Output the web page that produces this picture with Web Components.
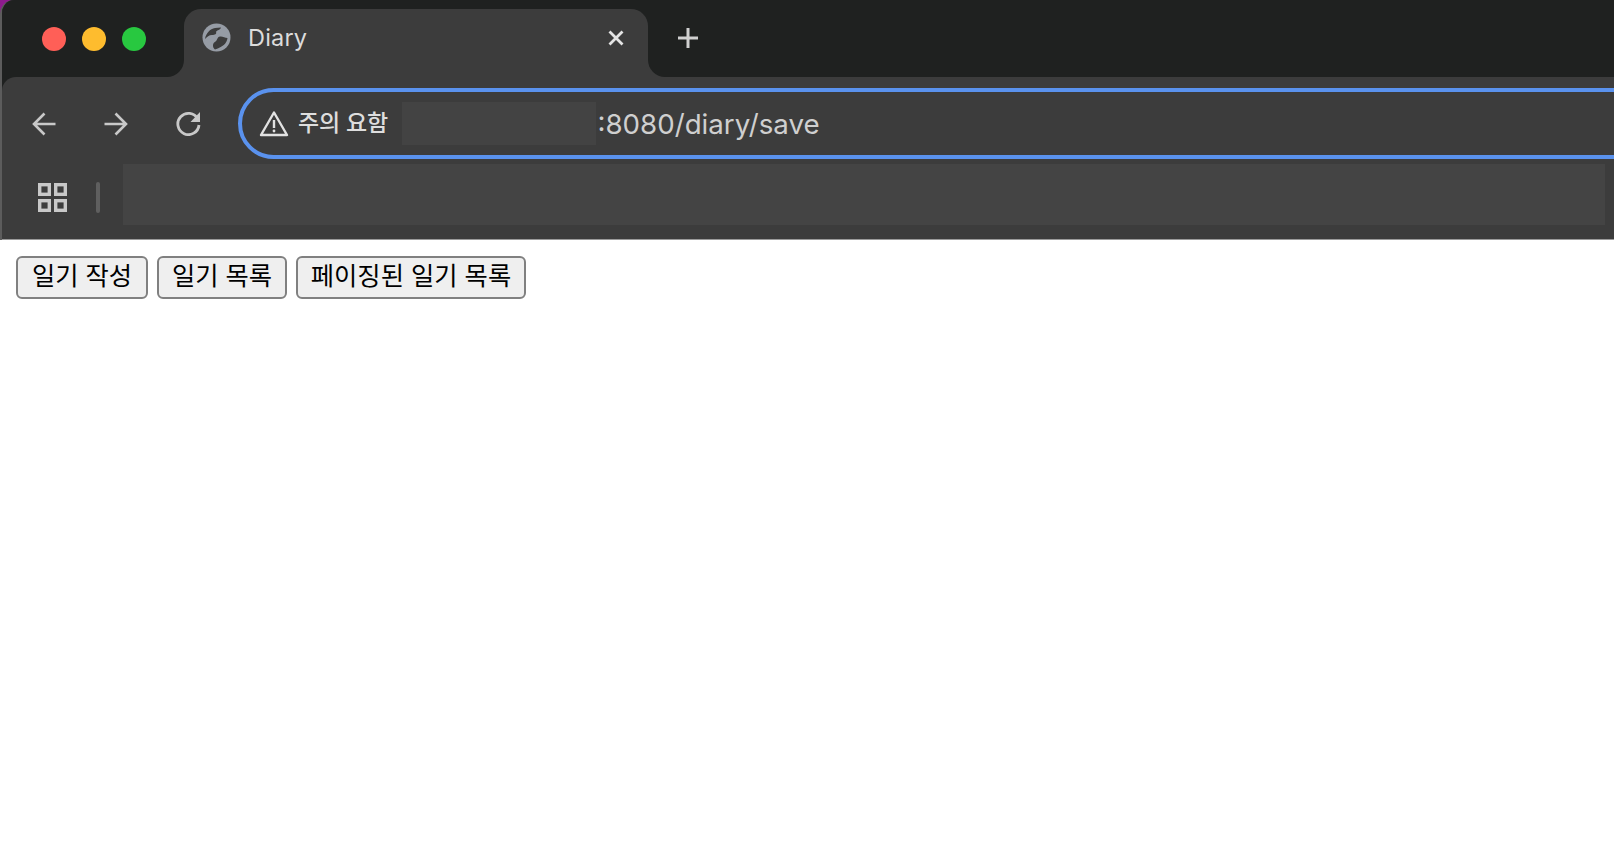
<!DOCTYPE html>
<html lang="ko">
<head>
<meta charset="utf-8">
<title>Diary</title>
<style>
html,body{margin:0;padding:0;background:#fff;overflow:hidden;height:100%}
body{font-family:"Noto Sans CJK KR","Liberation Sans",sans-serif}
</style>
</head>
<body>
<browser-window>
  <browser-tab title-text="Diary"></browser-tab>
  <omni-box slot="omni" badge="주의 요함" path=":8080/diary/save"></omni-box>
</browser-window>
<page-nav>
  <page-button w="132">일기 작성</page-button>
  <page-button w="130">일기 목록</page-button>
  <page-button w="230">페이징된 일기 목록</page-button>
</page-nav>
<script>
const def=(name,html,attrs)=>{customElements.define(name,class extends HTMLElement{
  constructor(){super();const r=this.attachShadow({mode:'open'});
    r.innerHTML=html;}
  connectedCallback(){(attrs||[]).forEach(a=>{const v=this.getAttribute(a);
    this.shadowRoot.querySelectorAll('[data-a="'+a+'"]').forEach(n=>n.textContent=v||'')})}
})};

def('traffic-lights',`<style>
:host{display:flex;gap:16px;padding:27px 0 0 40px}
i{display:block;width:24px;height:24px;border-radius:50%}
</style><i style="background:#ff5f57"></i><i style="background:#febc2e"></i><i style="background:#28c840"></i>`);

def('browser-tab',`<style>
:host{display:flex;width:464px;padding-top:9px;background:#1f2120;box-sizing:border-box}
.t{flex:1;background:#3c3c3c;border-radius:17px 17px 0 0;display:flex;align-items:flex-start;padding:14px 0 0 18px;box-sizing:border-box}
svg{display:block;flex:none}
.g{width:29px;height:29px}
.n{font:400 23.5px/29px "Inter","Roboto",sans-serif;letter-spacing:.2px;color:#dcdcdc;margin-left:17px;flex:1}
.x{width:18px;height:18px;margin:6px 23px 0 0}
</style><div class="t">
<svg class="g" viewBox="0 0 29 29"><circle cx="14.5" cy="14.5" r="14" fill="#969ca5"/>
<g fill="#3c3c3c"><path d="M3 16C4 10 8 6 13 5L19 4.500C18.500 7 15 7 14 9 15 11 13 12 10 12 7 12 5 14 3 16Z"/><path d="M25.500 15C25 20 21 24 13 26.500 10 24 10.500 20 13.500 18.500 15.500 17.500 15 14 18 13.500 20 13 23 14.500 25.500 15Z"/></g></svg>
<span class="n" data-a="title-text"></span>
<svg class="x" viewBox="0 0 18 18"><path d="M2.500 2.500l13 13M15.500 2.500l-13 13" stroke="#e4e4e4" stroke-width="2.800" fill="none"/></svg>
</div>`,['title-text']);

def('new-tab',`<style>
:host{display:block;flex:1;background:#1f2120;border-bottom-left-radius:17px;padding:28px 0 0 30px;box-sizing:border-box}
svg{display:block;width:20px;height:20px}
</style><svg viewBox="0 0 20 20"><path d="M10 0v20M0 10h20" stroke="#d0d0d0" stroke-width="3" fill="none"/></svg>`);

def('omni-box',`<style>
:host{display:flex;flex:1;align-items:center;height:71px;margin:11px -60px 0 0;box-sizing:border-box;border:4px solid #5a92ee;border-radius:36px;padding-left:17px;min-width:0}
svg{display:block;flex:none;width:30px;height:27px}
.b{font:500 23px/30px "Noto Sans CJK KR",sans-serif;color:#dedede;margin-left:9px;white-space:nowrap;width:89px;flex:none;letter-spacing:-.25px;margin-top:-5px}
.m{flex:none;width:194px;height:43px;background:#434343;margin:0 0 0 15px}
.p{font:400 27.7px/36px "Inter","Roboto",sans-serif;color:#cfcfcf;margin-left:1.5px;white-space:nowrap}
</style>
<svg viewBox="0 0 30 27"><path d="M15 2.500L28 25H2z" fill="none" stroke="#e2e2e2" stroke-width="2.400" stroke-linejoin="round"/><path d="M15 10v8" stroke="#e2e2e2" stroke-width="2.400"/><circle cx="15" cy="21" r="1.400" fill="#e2e2e2"/></svg>
<span class="b" data-a="badge"></span><span class="m"></span><span class="p" data-a="path"></span>`,['badge','path']);

def('browser-window',`<style>
:host{display:block;background:#8e1b8e;height:240px;overflow:hidden;box-sizing:border-box}
.frame{height:100%;display:flex;flex-direction:column;border-left:2px solid #5c5c5c;border-top-left-radius:14px;background:#1f2120;overflow:hidden;box-sizing:border-box}
.strip{display:flex;height:77px;flex:none;background:#3c3c3c}
.lead{width:182px;flex:none;background:#1f2120;border-bottom-right-radius:17px;box-sizing:border-box}
.tools{flex:1;background:#3c3c3c;border-top-left-radius:14px;display:flex;flex-direction:column;border-bottom:1px solid #9b9b9b;min-height:0}
.row1{display:flex;height:87px;flex:none;align-items:flex-start;padding-left:30px}
.row2{display:flex;align-items:flex-start;flex:1;padding-left:36px}
.ic{flex:none;display:block}
.inset{flex:1;height:61px;background:#444;margin-right:9px}
.div{width:4px;height:31px;background:#5f5f5f;border-radius:2px;margin:18px 23px 0 29px;flex:none}
</style>
<div class="frame">
<div class="strip">
  <div class="lead"><traffic-lights></traffic-lights></div>
  <slot></slot>
  <new-tab></new-tab>
</div>
<div class="tools">
  <div class="row1">
    <svg class="ic" style="width:24px;height:24px;margin:35px 48px 0 0" viewBox="0 0 24 24"><path d="M23.500 12H2M12.500 1.500L2 12l10.500 10.500" fill="none" stroke="#c8c8c8" stroke-width="2.600"/></svg>
    <svg class="ic" style="width:24px;height:24px;margin:35px 47px 0 0" viewBox="0 0 24 24"><path d="M.5 12H22M11.500 1.500L22 12 11.500 22.500" fill="none" stroke="#c8c8c8" stroke-width="2.600"/></svg>
    <svg class="ic" style="width:25px;height:25px;margin:34px 37px 0 1px" viewBox="0 0 25 25"><path d="M21.800 8A10.600 10.600 0 1 0 23 14" fill="none" stroke="#c8c8c8" stroke-width="2.800"/><path d="M24 1v10H14.500z" fill="#c8c8c8"/></svg>
    <slot name="omni"></slot>
  </div>
  <div class="row2">
    <svg class="ic" style="width:29px;height:29px;margin-top:19px" viewBox="0 0 29 29"><g fill="none" stroke="#c8c8c8" stroke-width="3.400"><rect x="1.700" y="1.700" width="9.600" height="9.600"/><rect x="17.700" y="1.700" width="9.600" height="9.600"/><rect x="1.700" y="17.700" width="9.600" height="9.600"/><rect x="17.700" y="17.700" width="9.600" height="9.600"/></g></svg>
    <div class="div"></div>
    <div class="inset"></div>
  </div>
</div>
</div>`);

def('page-nav',`<style>
:host{display:flex;gap:9px;padding:16px 0 0 16px;align-items:flex-start}
</style><slot></slot>`);

customElements.define('page-button',class extends HTMLElement{
  constructor(){super();this.attachShadow({mode:'open'}).innerHTML=`<style>
:host{display:block;flex:none}
button{display:block;width:100%;height:43px;box-sizing:border-box;padding:0 0 6px;border:2px solid #808080;border-radius:6px;background:#efefef;color:#000;font:400 25.3px/1 "Noto Sans CJK KR",sans-serif;white-space:nowrap;margin:0}
</style><button><slot></slot></button>`;}
  connectedCallback(){this.style.width=this.getAttribute('w')+'px'}
});
</script>
</body>
</html>
